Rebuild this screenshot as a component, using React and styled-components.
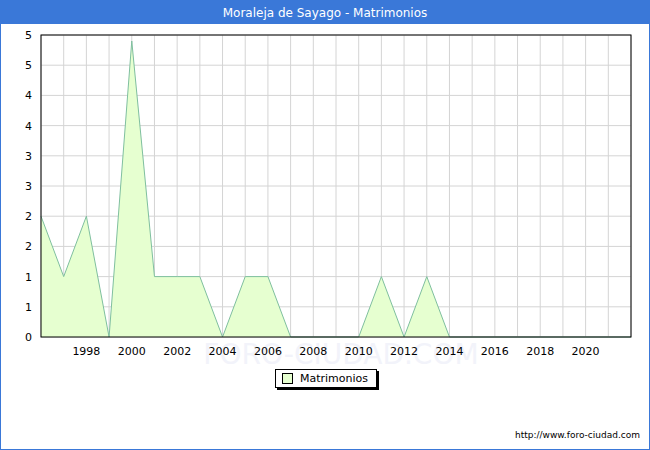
import React from "react";
import styled, { createGlobalStyle } from "styled-components";

const Global = createGlobalStyle`
  body { margin: 0; font-family: "DejaVu Sans", Verdana, sans-serif; }
`;

const Frame = styled.div`
  width: 650px;
  height: 450px;
  box-sizing: border-box;
  border: 1px solid #3a78d8;
  background: #fff;
  display: flex;
  flex-direction: column;
`;

const TitleBar = styled.div`
  height: 23px;
  background: #3a78d8;
  color: #fff;
  font-size: 12px;
  display: flex;
  align-items: center;
  justify-content: center;
`;

const ChartBox = styled.div`
  height: 345px;
`;

const LegendRow = styled.div`
  display: flex;
  justify-content: center;
  padding-left: 2px;
`;

const Legend = styled.div`
  display: flex;
  align-items: center;
  gap: 7px;
  border: 1px solid #000;
  box-shadow: 2px 2px 0 #000;
  padding: 2px 8px 2px 6px;
  font-size: 11px;
  color: #000;
`;

const Swatch = styled.span`
  width: 9px;
  height: 9px;
  border: 1px solid #000;
  background: #e6ffd0;
`;

const Footer = styled.div`
  margin-top: auto;
  padding: 0 9px 9px 0;
  text-align: right;
  font-size: 9px;
  color: #000;
`;

const data = [2, 1, 2, 0, 4.9, 1, 1, 1, 0, 1, 1, 0, 0, 0, 0, 1, 0, 1, 0, 0, 0, 0, 0, 0, 0, 0, 0];
const X0 = 40, X1 = 630, Y0 = 35, Y1 = 337;
const px = (i) => X0 + ((X1 - X0) / 26) * i;
const py = (v) => Y1 - ((Y1 - Y0) / 5) * v;
const yLabels = ["5", "5", "4", "4", "3", "3", "2", "2", "1", "1", "0"];

function Chart() {
  const line = data.map((v, i) => `${px(i)},${py(v)}`).join(" ");
  const area = `${px(0)},${Y1} ${line} ${px(data.length - 1)},${Y1}`;
  return (
    <svg width="648" height="345" viewBox="0 24 648 345">
      <text x="340" y="364" fontSize="28" fill="#f2f3fa" textAnchor="middle" fontFamily="DejaVu Sans" aria-hidden="true">FORO-CIUDAD.COM</text>
      {Array.from({ length: 27 }, (_, i) => (
        <line key={"v" + i} x1={px(i)} x2={px(i)} y1={Y0} y2={Y1} stroke="#d4d4d4" />
      ))}
      {yLabels.map((l, i) => {
        const y = Y0 + ((Y1 - Y0) / 10) * i;
        return (
          <g key={"h" + i}>
            <line x1={X0} x2={X1} y1={y} y2={y} stroke="#d4d4d4" />
            <text x="31" y={y + 4} fontSize="11" textAnchor="end" fontFamily="DejaVu Sans">{l}</text>
          </g>
        );
      })}
      <polygon points={area} fill="#e6ffd0" />
      <polyline points={line} fill="none" stroke="#7fbf9f" strokeWidth="1" />
      <rect x={X0} y={Y0} width={X1 - X0} height={Y1 - Y0} fill="none" stroke="#000" />
      {Array.from({ length: 12 }, (_, k) => {
        const yr = 1998 + k * 2;
        return (
          <text key={yr} x={px(yr - 1996)} y="355" fontSize="11" textAnchor="middle" fontFamily="DejaVu Sans">{yr}</text>
        );
      })}
    </svg>
  );
}

export default function App() {
  return (
    <Frame>
      <Global />
      <TitleBar>Moraleja de Sayago - Matrimonios</TitleBar>
      <ChartBox>
        <Chart />
      </ChartBox>
      <LegendRow>
        <Legend>
          <Swatch />
          Matrimonios
        </Legend>
      </LegendRow>
      <Footer>http://www.foro-ciudad.com</Footer>
    </Frame>
  );
}
